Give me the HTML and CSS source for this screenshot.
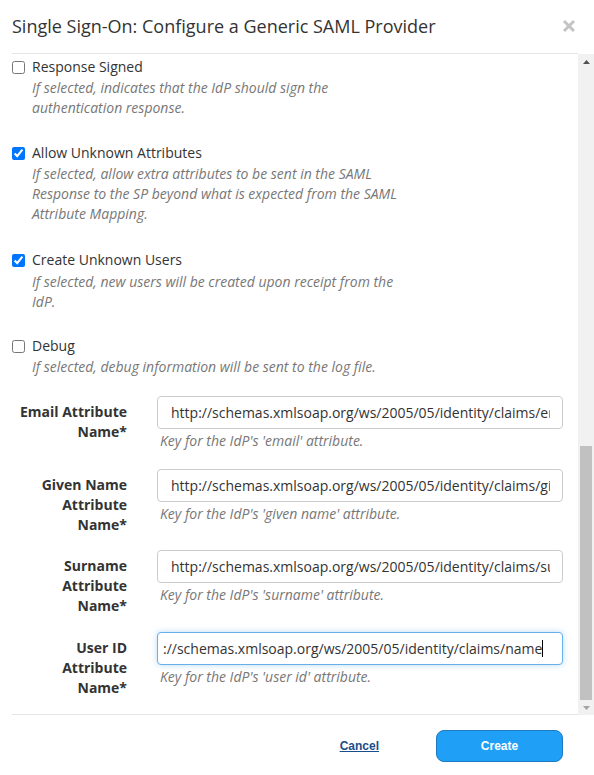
FILE: index.html
```html
<!DOCTYPE html>
<html lang="en">
<head>
<meta charset="utf-8">
<title>Single Sign-On: Configure a Generic SAML Provider</title>
<link rel="stylesheet" href="styles.css">
</head>
<body>
<div class="modal">
  <div class="modal-header">
    <h1 class="modal-title">Single Sign-On: Configure a Generic SAML Provider</h1>
    <button class="close" aria-label="Close">
      <svg width="14" height="14" viewBox="0 0 14 14"><path d="M2 2 L12 12 M12 2 L2 12" stroke="#c4c4c4" stroke-width="3" stroke-linecap="butt"/></svg>
    </button>
  </div>
  <div class="modal-body-row">
    <div class="modal-body">
      <div class="check-block">
        <label class="check-label"><input type="checkbox"> Response Signed</label>
        <p class="check-desc">If selected, indicates that the IdP should sign the authentication response.</p>
      </div>
      <div class="check-block tall">
        <label class="check-label"><input type="checkbox" checked> Allow Unknown Attributes</label>
        <p class="check-desc">If selected, allow extra attributes to be sent in the SAML Response to the SP beyond what is expected from the SAML Attribute Mapping.</p>
      </div>
      <div class="check-block">
        <label class="check-label"><input type="checkbox" checked> Create Unknown Users</label>
        <p class="check-desc desc-low">If selected, new users will be created upon receipt from the IdP.</p>
      </div>
      <div class="check-block last">
        <label class="check-label"><input type="checkbox"> Debug</label>
        <p class="check-desc">If selected, debug information will be sent to the log file.</p>
      </div>

      <div class="form-row">
        <label class="field-label">Email Attribute Name*</label>
        <div class="field">
          <input class="text-input" type="text" value="http://schemas.xmlsoap.org/ws/2005/05/identity/claims/emailaddress">
          <p class="help">Key for the IdP's 'email' attribute.</p>
        </div>
      </div>
      <div class="form-row">
        <label class="field-label">Given Name Attribute Name*</label>
        <div class="field">
          <input class="text-input" type="text" value="http://schemas.xmlsoap.org/ws/2005/05/identity/claims/givenname">
          <p class="help">Key for the IdP's 'given name' attribute.</p>
        </div>
      </div>
      <div class="form-row spaced">
        <label class="field-label">Surname Attribute Name*</label>
        <div class="field">
          <input class="text-input" type="text" value="http://schemas.xmlsoap.org/ws/2005/05/identity/claims/surname">
          <p class="help">Key for the IdP's 'surname' attribute.</p>
        </div>
      </div>
      <div class="form-row">
        <label class="field-label">User ID Attribute Name*</label>
        <div class="field">
          <div class="text-input focused"><span class="input-text">://schemas.xmlsoap.org/ws/2005/05/identity/claims/name</span><span class="caret"></span></div>
          <p class="help">Key for the IdP's 'user id' attribute.</p>
        </div>
      </div>
    </div>
    <div class="scrollbar">
      <div class="sb-arrow"><svg width="7" height="4" viewBox="0 0 7 4"><path d="M0 4 L3.5 0 L7 4 Z" fill="#505050"/></svg></div>
      <div class="sb-track"><div class="sb-thumb"></div></div>
      <div class="sb-arrow"><svg width="7" height="4" viewBox="0 0 7 4"><path d="M0 0 L3.5 4 L7 0 Z" fill="#a3a3a3"/></svg></div>
    </div>
  </div>
  <div class="modal-footer">
    <a class="cancel" href="#">Cancel</a>
    <button class="create">Create</button>
  </div>
</div>
</body>
</html>
```
FILE: styles.css
```css
* { box-sizing: border-box; }
html, body { margin: 0; padding: 0; background: #fff; }
body {
  font-family: "Open Sans", "Noto Sans", sans-serif;
  font-size: 14px;
  color: #333;
}
.modal {
  width: 594px;
  height: 775px;
  display: flex;
  flex-direction: column;
}
.modal-header {
  height: 54px;
  margin: 0 16px 0 12px;
  border-bottom: 1px solid #e5e5e5;
  display: flex;
  align-items: center;
  justify-content: space-between;
  flex: none;
}
.modal-title {
  margin: 0;
  font-size: 18px;
  font-weight: 400;
  color: #333;
  line-height: 24px;
  padding-bottom: 2px;
}
.close {
  border: 0;
  background: none;
  padding: 0;
  margin: 0 2px 2px 0;
  width: 14px;
  height: 14px;
  display: flex;
}
.modal-body-row {
  height: 661px;
  display: flex;
  flex: none;
}
.modal-body {
  flex: 1;
  margin-left: 12px;
  border-bottom: 1px solid #e5e5e5;
  overflow: hidden;
  padding: 3px 15px 0 0;
}
.check-block { margin-bottom: 25px; }
.check-block.tall { margin-bottom: 26px; }
.check-block.last { margin-bottom: 19px; }
.check-label {
  display: flex;
  align-items: center;
  line-height: 20px;
  height: 20px;
  gap: 7px;
}
.check-label input {
  margin: 0;
  width: 13px;
  height: 13px;
}
.check-desc {
  margin: 1px 0 0 20px;
  width: 378px;
  font-style: italic;
  color: #777;
  line-height: 20px;
}
.check-desc.desc-low { margin-top: 2px; margin-bottom: -1px; }
.form-row {
  display: flex;
  gap: 30px;
  margin-bottom: 15px;
}
.form-row.spaced { margin-bottom: 16px; }
.field-label {
  width: 115px;
  flex: none;
  text-align: right;
  font-weight: 700;
  line-height: 20px;
  padding-top: 6px;
}
.field { width: 406px; flex: none; }
.text-input {
  display: block;
  width: 406px;
  height: 33px;
  border: 1px solid #ccc;
  border-radius: 4px;
  padding: 0 12px 0 13px;
  font-family: inherit;
  font-size: 14px;
  color: #333;
  background: #fff;
  outline: none;
}
.text-input.focused {
  border-color: #66afe9;
  box-shadow: 0 0 6px rgba(102, 175, 233, 0.45);
  display: flex;
  align-items: center;
  padding: 0 4px 0 5px;
  overflow: hidden;
  white-space: nowrap;
}
.caret {
  display: inline-block;
  width: 1px;
  height: 17px;
  background: #000;
  flex: none;
}
.help {
  margin: 2px 0 3px 3px;
  font-style: italic;
  color: #777;
  line-height: 20px;
}
.scrollbar {
  width: 16px;
  flex: none;
  background: #f1f1f1;
  display: flex;
  flex-direction: column;
}
.sb-arrow {
  height: 15px;
  display: flex;
  align-items: center;
  justify-content: center;
  flex: none;
}
.sb-track {
  flex: 1;
  display: flex;
  flex-direction: column;
  justify-content: flex-end;
  padding: 0 2px;
}
.sb-thumb {
  height: 254px;
  background: #c1c1c1;
}
.modal-footer {
  flex: 1;
  display: flex;
  align-items: center;
  justify-content: flex-end;
  padding: 2px 31px 0 0;
  gap: 57px;
}
.cancel {
  font-family: "Liberation Sans", Arial, sans-serif;
  font-weight: 700;
  font-size: 12px;
  color: #1a4e8a;
  text-decoration: underline;
}
.create {
  width: 127px;
  height: 32px;
  border: 1px solid #1b7ac0;
  border-radius: 8px;
  background: #1f9ff6;
  color: #fff;
  font-family: "Liberation Sans", Arial, sans-serif;
  font-weight: 700;
  font-size: 12px;
  padding: 0;
}
```
